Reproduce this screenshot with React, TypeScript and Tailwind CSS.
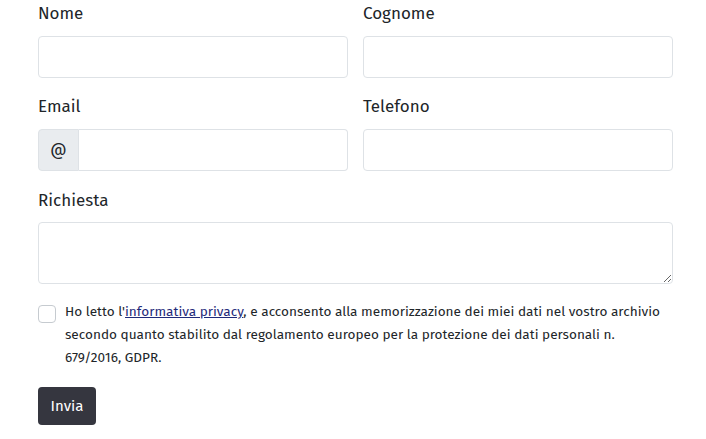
import React from 'react'

const font = { fontFamily: '"Fira Sans", "Open Sans", "Liberation Sans", sans-serif' }

function Field({ label, children, mb = 'mb-[10px]' }: { label: string; children: React.ReactNode; mb?: string }) {
  return (
    <div className="flex flex-col">
      <label className={`text-[17px] leading-[24px] text-[#212529] ${mb}`}>{label}</label>
      {children}
    </div>
  )
}

const inputCls =
  'h-[42px] w-full rounded-[4px] border border-[#dee2e6] bg-white px-3 text-[16px] text-[#212529] outline-none'

export default function App() {
  return (
    <div className="w-[706px] bg-white pl-[38px] pr-[33px] pt-[2px] pb-4" style={font}>
      {/* Nome / Cognome */}
      <div className="grid grid-cols-2 gap-x-[15px]">
        <Field label="Nome">
          <input className={inputCls} />
        </Field>
        <Field label="Cognome">
          <input className={inputCls} />
        </Field>
      </div>

      {/* Email / Telefono */}
      <div className="grid grid-cols-2 gap-x-[15px] mt-[17px]">
        <Field label="Email">
          <div className="flex h-[42px]">
            <span className="flex w-[41px] shrink-0 items-center justify-center rounded-l-[4px] border border-[#dee2e6] bg-[#e9ecef] text-[16px] text-[#212529]">
              @
            </span>
            <input className="h-[42px] w-full min-w-0 rounded-r-[4px] border border-l-0 border-[#dee2e6] bg-white px-3 outline-none" />
          </div>
        </Field>
        <Field label="Telefono">
          <input className={inputCls} />
        </Field>
      </div>

      {/* Richiesta */}
      <div className="mt-[18px]">
        <Field label="Richiesta" mb="mb-[9px]">
          <textarea className="h-[62px] w-full rounded-[4px] border border-[#dee2e6] bg-white px-3 py-2 outline-none" />
        </Field>
      </div>

      {/* Privacy */}
      <div className="mt-[16px] flex items-start gap-[9px]">
        <span className="mt-[5px] h-[18px] w-[18px] shrink-0 rounded-[4px] border border-[#c6cbd0] bg-white" />
        <p className="text-[13.6px] leading-[23px] text-[#212529]">
          Ho letto l'
          <a href="#" className="text-[#1f2a7a] underline">
            informativa privacy
          </a>
          , e acconsento alla memorizzazione dei miei dati nel vostro archivio secondo quanto stabilito dal
          regolamento europeo per la protezione dei dati personali n. 679/2016, GDPR.
        </p>
      </div>

      <button className="mt-[18px] h-[38px] w-[58px] rounded-[4px] bg-[#35363f] text-[15px] text-white">
        Invia
      </button>
    </div>
  )
}
